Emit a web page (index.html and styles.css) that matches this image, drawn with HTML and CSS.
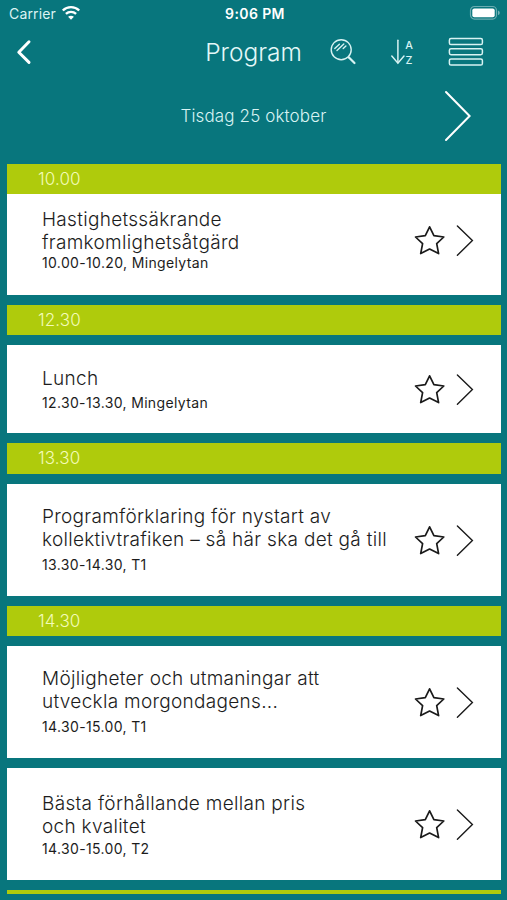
FILE: index.html
```
<!DOCTYPE html>
<html lang="sv">
<head>
    <meta charset="UTF-8">
    <meta name="viewport" content="width=device-width, initial-scale=1.0">
    <title>Program</title>
    <link rel="stylesheet" href="styles.css">
</head>
<body>
<svg class="symbols" width="0" height="0">
    <symbol id="star" viewBox="0 0 32 32">
        <path d="M15.6 1.8 L19.9 10.6 L29.8 12 L22.7 18.7 L24.6 28.6 L15.6 24 L6.7 28.6 L8.6 18.7 L1.5 12 L11.3 10.6 Z" fill="none" stroke="#1a1a1a" stroke-width="1.7" stroke-linejoin="round"/>
    </symbol>
    <symbol id="arrow" viewBox="0 0 18 32">
        <path d="M1.4 1 L16.4 15.6 L1.4 30.2" fill="none" stroke="#1a1a1a" stroke-width="1.4" stroke-linecap="round"/>
    </symbol>
</svg>
<header>
    <div class="status-bar">
        <div class="carrier">
            <span>Carrier</span>
            <svg width="20" height="16" viewBox="0 0 20 16" fill="none" stroke="#fff" stroke-width="2.4">
                <path d="M1.8 5.5 C6.4 1 13.6 1 18.2 5.5"/>
                <path d="M4.9 8.9 C7.8 6.2 12.2 6.2 15.1 8.9"/>
                <path d="M10 14.8 L7.1 11.8 C8.7 10.3 11.3 10.3 12.9 11.8 Z" fill="#fff" stroke="none"/>
            </svg>
        </div>
        <span class="clock">9:06 PM</span>
        <svg class="battery" width="32" height="16" viewBox="0 0 32 16">
            <rect x="1.5" y="1.5" width="26" height="12.6" rx="4" fill="none" stroke="#fff" stroke-opacity=".4" stroke-width="1.2"/>
            <rect x="3.3" y="3.4" width="22.4" height="8.9" rx="2" fill="#fff"/>
            <path d="M29 5.5 C31.3 6.3 31.3 9.3 29 10.1 Z" fill="#fff" fill-opacity=".45"/>
        </svg>
    </div>
    <nav>
        <svg class="back" width="18" height="28" viewBox="0 0 18 28">
            <path d="M14 3.8 L3.8 14.2 L14 24.4" fill="none" stroke="#fff" stroke-width="3" stroke-linecap="round" stroke-linejoin="round"/>
        </svg>
        <h1>Program</h1>
        <div class="tools">
            <svg width="28" height="28" viewBox="0 0 28 28" fill="none" stroke="#d8f3f3" stroke-width="1.4" stroke-linecap="round">
                <circle cx="12.2" cy="11.7" r="10"/>
                <path d="M5.8 10.6 L10.4 6.3 M8 12.5 L14.8 6.1 M14.2 10.6 L16.9 8"/>
                <path d="M20 19.5 L25.5 25" stroke-width="2.2"/>
            </svg>
            <svg class="sort" width="24" height="28" viewBox="0 0 24 28" fill="none" stroke="#d8f3f3" stroke-width="1.5" stroke-linecap="round">
                <path d="M7.9 2.3 V24.8"/>
                <path d="M1.8 18 L7.9 25.2 L14 18"/>
                <text x="15.2" y="11.3">A</text>
                <text x="15.6" y="25.8">Z</text>
            </svg>
            <svg class="menu" width="36" height="30" viewBox="0 0 36 30" fill="none" stroke="#d8f3f3" stroke-width="1.5">
                <rect x="1.4" y="1.6" width="33" height="6" rx="1.6"/>
                <rect x="1.4" y="11.7" width="33" height="6" rx="1.6"/>
                <rect x="1.4" y="22" width="33" height="6" rx="1.6"/>
            </svg>
        </div>
    </nav>
    <div class="day">
        <span>Tisdag 25 oktober</span>
        <svg class="next-day" width="28" height="52" viewBox="0 0 28 52">
            <path d="M2 2 L25.6 26 L2 50" fill="none" stroke="#fff" stroke-width="2" stroke-linecap="round"/>
        </svg>
    </div>
</header>
<main>
    <section class="slot first">
        <h2>10.00</h2>
        <article class="session tight">
            <div class="info">
                <h3>Hastighetssäkrande<br>framkomlighetsåtgärd</h3>
                <p>10.00-10.20, Mingelytan</p>
            </div>
            <svg class="star"><use href="#star"/></svg>
            <svg class="arrow"><use href="#arrow"/></svg>
        </article>
    </section>
    <section class="slot">
        <h2>12.30</h2>
        <article class="session short">
            <div class="info">
                <h3>Lunch</h3>
                <p>12.30-13.30, Mingelytan</p>
            </div>
            <svg class="star"><use href="#star"/></svg>
            <svg class="arrow"><use href="#arrow"/></svg>
        </article>
    </section>
    <section class="slot">
        <h2>13.30</h2>
        <article class="session">
            <div class="info">
                <h3>Programförklaring för nystart av<br>kollektivtrafiken – så här ska det gå till</h3>
                <p>13.30-14.30, T1</p>
            </div>
            <svg class="star"><use href="#star"/></svg>
            <svg class="arrow"><use href="#arrow"/></svg>
        </article>
    </section>
    <section class="slot">
        <h2>14.30</h2>
        <article class="session">
            <div class="info">
                <h3>Möjligheter och utmaningar att<br>utveckla morgondagens...</h3>
                <p>14.30-15.00, T1</p>
            </div>
            <svg class="star"><use href="#star"/></svg>
            <svg class="arrow"><use href="#arrow"/></svg>
        </article>
        <article class="session low">
            <div class="info">
                <h3>Bästa förhållande mellan pris<br>och kvalitet</h3>
                <p>14.30-15.00, T2</p>
            </div>
            <svg class="star"><use href="#star"/></svg>
            <svg class="arrow"><use href="#arrow"/></svg>
        </article>
    </section>
    <div class="next-slot"></div>
</main>
</body>
</html>
```
FILE: styles.css
```
* {
    box-sizing: border-box;
}

body {
    margin: 0;
    height: 900px;
    overflow: hidden;
    background: #08767d;
    font-family: Inter, "Liberation Sans", sans-serif;
}

h1, h2, h3, p {
    margin: 0;
    font-weight: 300;
    white-space: nowrap;
}

svg {
    display: block;
    flex: none;
}

.symbols {
    display: none;
}

header {
    height: 163.6px;
    color: #fff;
}

.status-bar {
    display: grid;
    grid-template-columns: 1fr auto 1fr;
    align-items: center;
    height: 28px;
    padding: 0 6px 0 9px;
}

.carrier {
    display: flex;
    align-items: center;
    gap: 5px;
    font-size: 14px;
    letter-spacing: 0.15px;
    color: #dcf3f3;
}

.carrier span {
    margin-top: -1px;
}

.carrier svg {
    margin-top: -3px;
}

.clock {
    margin-top: -1px;
    font-size: 14px;
    font-weight: 600;
    letter-spacing: 0.4px;
}

.battery {
    justify-self: end;
    margin-top: -2px;
}

nav {
    display: grid;
    grid-template-columns: 1fr auto 1fr;
    align-items: center;
    height: 48px;
    padding: 0 23px 0 15px;
}

h1 {
    padding-left: 8px;
    font-size: 24.5px;
    color: #e4f8f8;
}

.tools {
    display: flex;
    align-items: center;
    justify-content: flex-end;
}

.sort {
    margin: 0 34px 0 33px;
}

.sort text {
    font-size: 10.8px;
    font-weight: 500;
    fill: #d8f3f3;
    stroke: none;
}

.day {
    display: grid;
    grid-template-columns: 1fr auto 1fr;
    align-items: center;
    height: 80px;
    padding: 0 35px;
    font-size: 17px;
    font-weight: 300;
    letter-spacing: 0.12px;
    color: #d8f3f3;
}

.day span {
    grid-column: 2;
}

.next-day {
    justify-self: end;
}

main {
    padding: 0 6px 0 7px;
}

.slot {
    display: flex;
    flex-direction: column;
    gap: 9.9px;
    margin-bottom: 9.9px;
}

.first {
    gap: 0;
}

.slot h2 {
    height: 30.4px;
    padding-left: 31px;
    background: #afcb0c;
    color: #f3fbb8;
    font-size: 17px;
    line-height: 31px;
    letter-spacing: 0.1px;
}

.session {
    display: flex;
    align-items: flex-start;
    height: 112.1px;
    padding: 21.4px 27px 0 35px;
    background: #fff;
}

.info {
    flex: 1;
    color: #1c1c1c;
}

.info h3 {
    font-size: 19px;
    line-height: 23.3px;
    letter-spacing: 0.3px;
}

.info p {
    margin-top: 4px;
    font-size: 14px;
    font-weight: 400;
    line-height: 18px;
    letter-spacing: 0.35px;
}

.star {
    width: 32px;
    height: 32px;
    margin: 20px 10px 0 0;
}

.arrow {
    width: 18px;
    height: 32px;
    margin-top: 20px;
}

/* card that sits directly under its time bar */
.tight {
    height: 101.2px;
    padding-top: 13.6px;
}

.tight .star, .tight .arrow {
    margin-top: 17px;
}

.short {
    height: 88px;
    padding-top: 22px;
}

.short .star, .short .arrow {
    margin-top: 7px;
}

.short p {
    margin-top: 3px;
}

.low {
    padding-top: 24.4px;
}

.low .star, .low .arrow {
    margin-top: 17px;
}

.tight p, .low p {
    margin-top: 1px;
}

.tight p {
    margin-top: 0;
}

.next-slot {
    height: 4px;
    background: #afcb0c;
}
```
